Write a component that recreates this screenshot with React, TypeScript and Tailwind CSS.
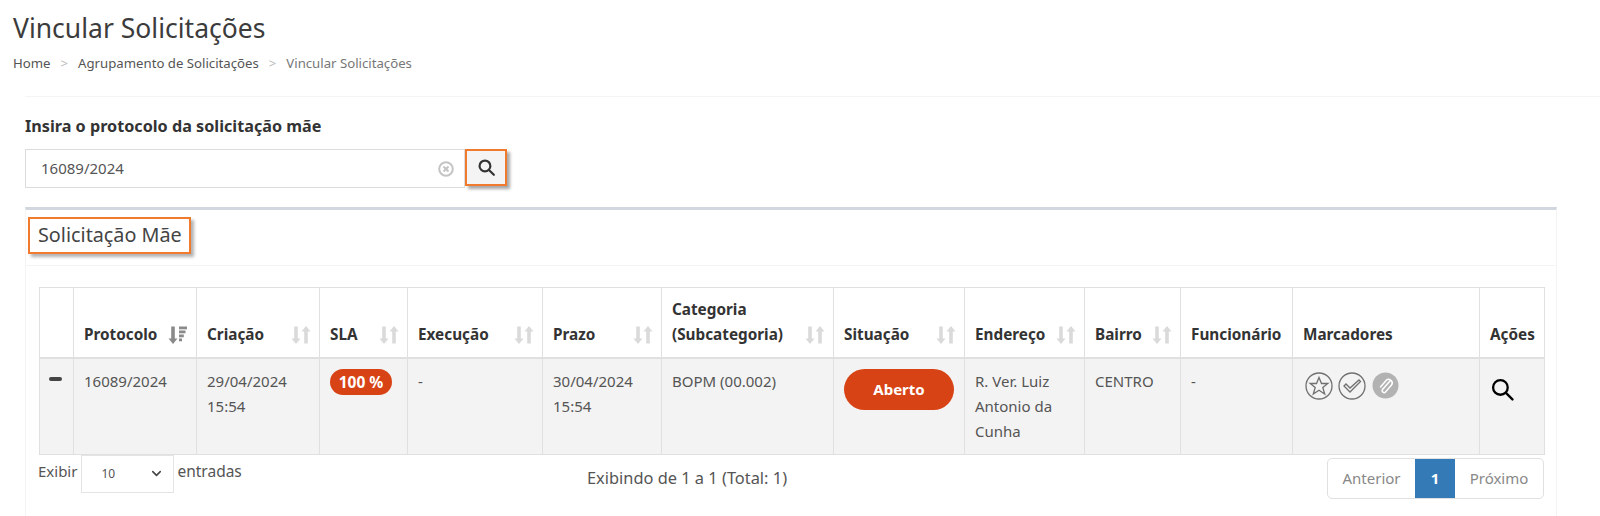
import React from 'react';
import { ChevronDown } from 'lucide-react';

const FONT = "font-['Noto_Sans',sans-serif]";

function SortIcon() {
    return (
        <svg width="20" height="20" viewBox="0 0 20 19" className="shrink-0 mb-[2px] -mr-[2px]" fill="#dadada">
            <path d="M3.200 1h3.600v12h2.700l-4.500 5.500L.500 13h2.700z" />
            <path d="M13.200 18h3.600V6h2.700L15 .500 10.500 6h2.700z" />
        </svg>
    );
}

function SortedIcon() {
    return (
        <svg width="20" height="20" viewBox="0 0 20 19" className="shrink-0 mb-[2px] -mr-[2px]" fill="#8a8a8a">
            <path d="M3.200 1h3.600v12h2.700l-4.500 5.500L.500 13h2.700z" />
            <rect x="11" y="1" width="8" height="2.800" />
            <rect x="11" y="5" width="6.500" height="2.800" />
            <rect x="11" y="9" width="4.800" height="2.800" />
            <rect x="11" y="13" width="3" height="2.800" />
        </svg>
    );
}

function HeadCell({ children, sort, sorted }: { children: React.ReactNode; sort?: boolean; sorted?: boolean }) {
    return (
        <th className="border border-[#e0e0e0] border-b-2 px-[10px] pb-[10px] align-bottom text-left font-bold">
            <div className="flex items-end justify-between leading-[25px]">
                <span>{children}</span>
                {sorted ? <SortedIcon /> : sort ? <SortIcon /> : null}
            </div>
        </th>
    );
}

function BodyCell({ children }: { children?: React.ReactNode }) {
    return <td className="border border-[#e0e0e0] px-[10px] pt-[10px] pb-[10px] align-top leading-[25px]">{children}</td>;
}

function SearchGlyph({ size, stroke }: { size: number; stroke: number }) {
    return (
        <svg width={size} height={size} viewBox="0 0 22 22" fill="none" stroke="currentColor" strokeWidth={stroke} strokeLinecap="round">
            <circle cx="9" cy="9" r="7" />
            <path d="M14.500 14.500L20.500 20.500" />
        </svg>
    );
}

function Markers() {
    return (
        <div className="ml-[2px] flex items-center gap-[5px] pt-[3px]">
            <svg width="28" height="28" viewBox="0 0 28 28" fill="none" stroke="#707070" strokeWidth="1.300">
                <circle cx="14" cy="14" r="13" />
                <path d="M14 5.500l2.500 6h6.300l-5 4 1.900 6.500L14 18.300 8.300 22l1.900-6.500-5-4h6.300z" />
            </svg>
            <svg width="28" height="28" viewBox="0 0 28 28" fill="none" stroke="#707070" strokeWidth="1.300">
                <circle cx="14" cy="14" r="13" />
                <path d="M6 14l2-2 4 4L21 8l1.500 1.500L12 20z" />
            </svg>
            <svg width="27" height="27" viewBox="0 0 27 27" className="ml-[1px]">
                <circle cx="13.500" cy="13.500" r="13" fill="#b2b2b2" />
                <path d="M18 9l-7.500 8.500a2 2 0 0 0 3 2.600l6-7a3.600 3.600 0 0 0-5.400-4.700l-5.600 6.500" fill="none" stroke="#fff" strokeWidth="1.500" strokeLinecap="round" />
            </svg>
        </div>
    );
}

export default function App() {
    return (
        <div className={`${FONT} h-[516px] w-[1600px] overflow-hidden bg-white text-[15px] text-[#555]`}>
            <div className="px-[13px] pt-[10px]">
                <h1 className="text-[26.500px] leading-[36px] text-[#3c3c3c]">Vincular Solicitações</h1>
                <div className="mt-[7px] flex items-center text-[13.200px] leading-[20px]">
                    <span className="text-[#555]">Home</span>
                    <span className="mx-[10px] text-[#bbb]">&gt;</span>
                    <span className="text-[#555]">Agrupamento de Solicitações</span>
                    <span className="mx-[10px] text-[#bbb]">&gt;</span>
                    <span className="text-[#777]">Vincular Solicitações</span>
                </div>
            </div>

            <div className="ml-[25px] mt-[23px] border-t border-[#f4f4f4] pt-[18px]">
                <label className="block text-[16.200px] font-bold leading-[22px] text-[#333]">Insira o protocolo da solicitação mãe</label>
                <div className="mt-[12px] flex items-start">
                    <div className="flex h-[39px] w-[440px] items-center justify-between border border-[#dcdcdc] pl-[15px] pr-[10px]">
                        <span>16089/2024</span>
                        <svg width="16" height="16" viewBox="0 0 16 16" fill="none" stroke="#c4c4c4" strokeWidth="2">
                            <circle cx="8" cy="8" r="6.800" />
                            <path d="M5.500 5.500l5 5M10.500 5.500l-5 5" />
                        </svg>
                    </div>
                    <button className="flex h-[37px] w-[42px] items-center justify-center border-2 border-[#f07a2e] bg-[#f4f4f4] text-[#333] shadow-[3px_3px_3px_rgba(0,0,0,0.35)]">
                        <SearchGlyph size={17} stroke={2.800} />
                    </button>
                </div>
            </div>

            <div className="ml-[25px] mt-[19px] h-[320px] w-[1532px] border-x border-t-[3px] border-x-[#f4f4f4] border-t-[#d2d6de]">
                <div className="h-[56px] border-b border-[#f4f4f4] pt-[7px]">
                    <div className="ml-[2px] inline-block h-[37px] w-[163px] border-2 border-[#f07a2e] bg-white pl-[8px] text-[19.800px] leading-[31px] text-[#444] shadow-[3px_3px_3px_rgba(0,0,0,0.3)]">
                        Solicitação Mãe
                    </div>
                </div>

                <div className="pl-[13px] pt-[21px]">
                    <table className="w-[1505px] table-fixed border-collapse">
                        <colgroup>
                            <col className="w-[34px]" />
                            <col className="w-[123px]" />
                            <col className="w-[123px]" />
                            <col className="w-[88px]" />
                            <col className="w-[135px]" />
                            <col className="w-[119px]" />
                            <col className="w-[172px]" />
                            <col className="w-[131px]" />
                            <col className="w-[120px]" />
                            <col className="w-[96px]" />
                            <col className="w-[112px]" />
                            <col className="w-[187px]" />
                            <col className="w-[65px]" />
                        </colgroup>
                        <thead className="bg-white text-[15.300px] text-[#333]">
                            <tr className="h-[70px]">
                                <HeadCell>{''}</HeadCell>
                                <HeadCell sorted>Protocolo</HeadCell>
                                <HeadCell sort>Criação</HeadCell>
                                <HeadCell sort>SLA</HeadCell>
                                <HeadCell sort>Execução</HeadCell>
                                <HeadCell sort>Prazo</HeadCell>
                                <HeadCell sort>Categoria<br />(Subcategoria)</HeadCell>
                                <HeadCell sort>Situação</HeadCell>
                                <HeadCell sort>Endereço</HeadCell>
                                <HeadCell sort>Bairro</HeadCell>
                                <HeadCell>Funcionário</HeadCell>
                                <HeadCell>Marcadores</HeadCell>
                                <HeadCell>Ações</HeadCell>
                            </tr>
                        </thead>
                        <tbody className="bg-[#f3f3f3]">
                            <tr className="h-[96px]">
                                <BodyCell>
                                    <div className="-ml-[1px] mt-[8px] h-[4px] w-[13px] rounded-[2px] bg-[#444]" />
                                </BodyCell>
                                <BodyCell>16089/2024</BodyCell>
                                <BodyCell>29/04/2024<br />15:54</BodyCell>
                                <BodyCell>
                                    <span className="block h-[26px] w-[62px] rounded-full bg-[#d84315] text-center text-[15.500px] font-bold leading-[26px] text-white">100 %</span>
                                </BodyCell>
                                <BodyCell>-</BodyCell>
                                <BodyCell>30/04/2024<br />15:54</BodyCell>
                                <BodyCell>BOPM (00.002)</BodyCell>
                                <BodyCell>
                                    <span className="block h-[41px] w-[110px] rounded-[21px] bg-[#d84315] text-center text-[15px] font-bold leading-[41px] text-white">Aberto</span>
                                </BodyCell>
                                <BodyCell>R. Ver. Luiz Antonio da Cunha</BodyCell>
                                <BodyCell>CENTRO</BodyCell>
                                <BodyCell>-</BodyCell>
                                <BodyCell><Markers /></BodyCell>
                                <BodyCell>
                                    <div className="ml-[1px] mt-[9px] text-black"><SearchGlyph size={23} stroke={2.200} /></div>
                                </BodyCell>
                            </tr>
                        </tbody>
                    </table>

                    <div className="flex w-[1505px] items-start">
                        <div className="flex w-[498px] items-start">
                            <span className="-ml-[1px] pt-[4px] leading-[24px]">Exibir</span>
                            <div className="ml-[4px] mr-[3px] flex h-[38px] w-[93px] items-center justify-between border border-[#e4e4e4] pl-[19px] pr-[9px] text-[12px]">
                                <span>10</span>
                                <ChevronDown size={15} strokeWidth={2.500} className="text-[#444]" />
                            </div>
                            <span className="pt-[4px] text-[15.500px] leading-[24px]">entradas</span>
                        </div>
                        <div className="w-[300px] whitespace-nowrap pt-[11px] text-center text-[16.400px] leading-[24px]">Exibindo de 1 a 1 (Total: 1)</div>
                        <div className="ml-auto mt-[3px] flex h-[41px] items-stretch rounded-[5px] border border-[#e0e0e0] leading-[39px]">
                            <span className="w-[87px] text-center text-[#888]">Anterior</span>
                            <span className="w-[40px] bg-[#337ab7] text-center font-bold text-white">1</span>
                            <span className="w-[88px] text-center text-[#888]">Próximo</span>
                        </div>
                    </div>
                </div>
            </div>
        </div>
    );
}
